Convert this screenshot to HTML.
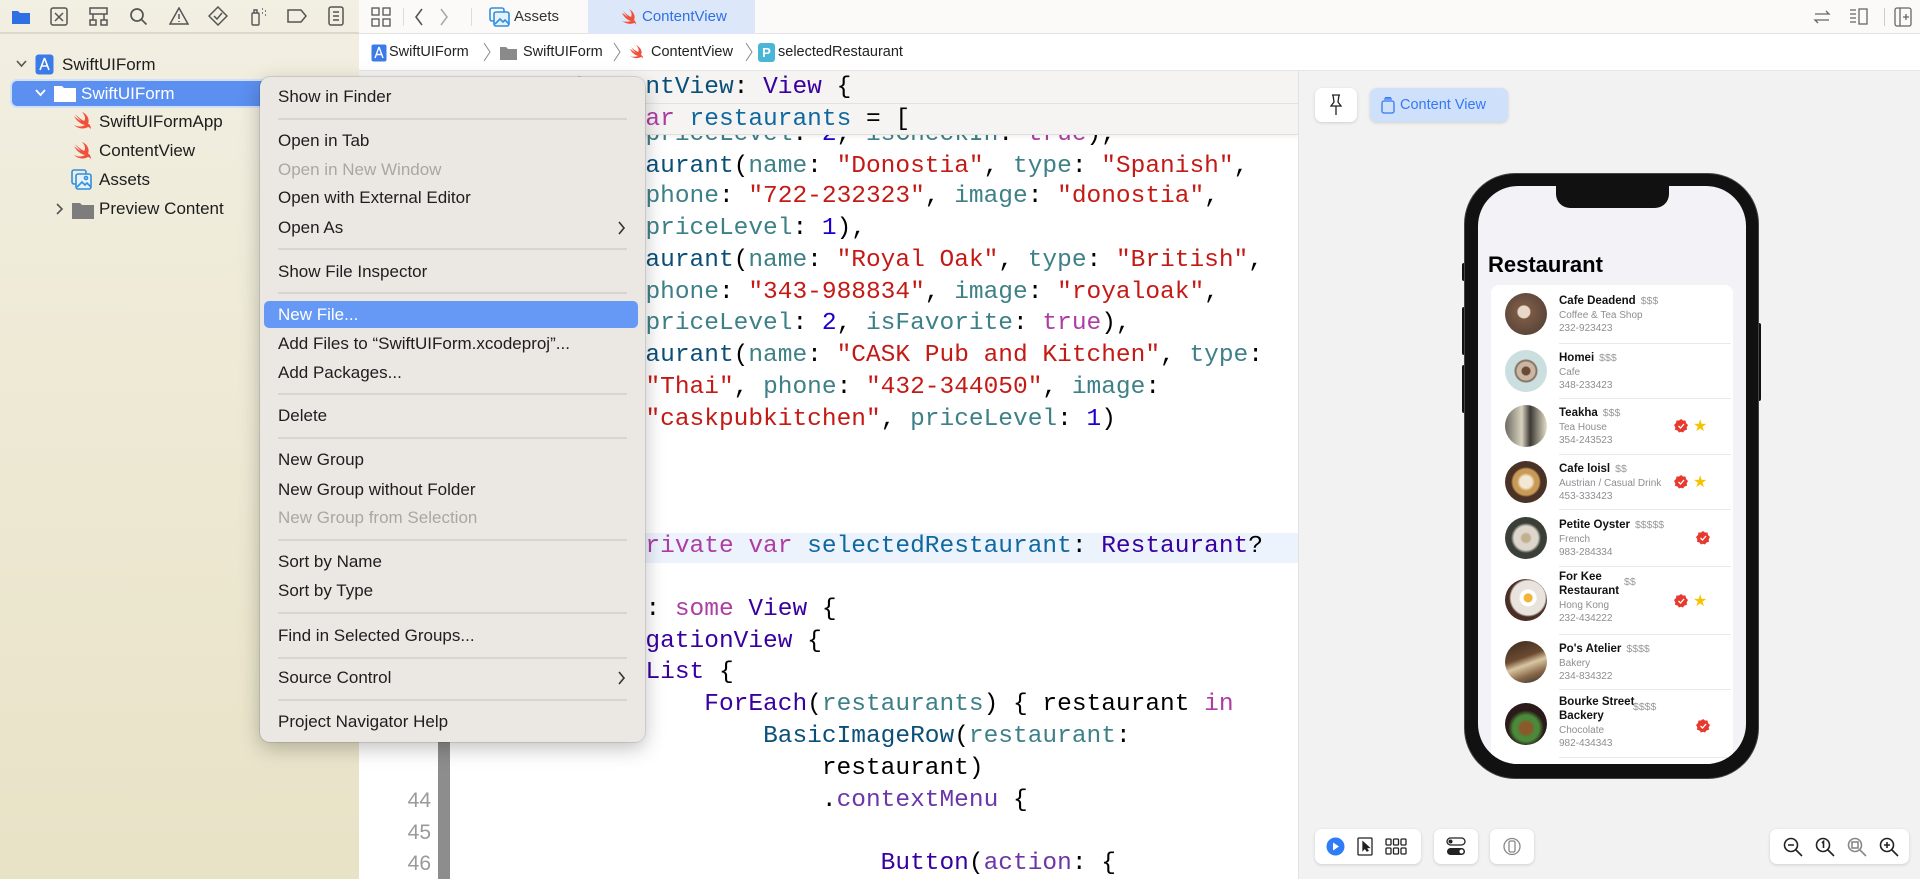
<!DOCTYPE html>
<html><head><meta charset="utf-8"><style>
*{margin:0;padding:0;box-sizing:border-box}
body{width:1920px;height:879px;overflow:hidden;position:relative;font-family:"Liberation Sans",sans-serif;background:#fff}
.abs{position:absolute}
#side{left:0;top:0;width:359px;height:879px;background:linear-gradient(180deg,#f2efe3 0%,#eeead6 40%,#e8e2c6 100%)}
#side .tb{position:absolute;left:0;top:0;width:359px;height:34px;border-bottom:2px solid #ddd8c8}
.tr{position:absolute;font-size:17px;color:#1d1d1d;white-space:nowrap}
#edtab{left:359px;top:0;width:1561px;height:34px;background:#fbfaf9;border-bottom:1px solid #e3e3e3}
#crumb{left:359px;top:34px;width:1561px;height:37px;background:#fff;border-bottom:1px solid #e6e6e6;font-size:14.5px;color:#222}
#code{left:359px;top:71px;width:939px;height:808px;background:#fff;overflow:hidden}
.cl{position:absolute;left:110px;font-family:"Liberation Mono",monospace;font-size:24.5px;white-space:pre;color:#000;line-height:32px;height:32px}
.k{color:#ad3da4}.s{color:#c41a16}.n{color:#1c00cf}.p{color:#3e8087}.t{color:#3900a0}.v{color:#0f68a0}.m{color:#6c36a9}.b{color:#0b4f79}
.ln{position:absolute;left:30px;width:42px;text-align:right;font-size:21px;color:#9a9a9a;line-height:32px}
#menu{left:260px;top:77px;width:385px;height:665px;background:#ebe8e4;border-radius:10px;box-shadow:0 6px 20px rgba(0,0,0,.25),0 0 0 1px rgba(0,0,0,.1)}
.mi{position:absolute;left:18px;font-size:17px;color:#1e1e1e;line-height:20px;white-space:nowrap}
.mi.d{color:#a9a7a4}
.sep{position:absolute;left:18px;width:349px;height:2px;background:#d8d5d1}
#prev{left:1298px;top:71px;width:622px;height:808px;background:#f2f2f2;border-left:1px solid #e2e2e2}
.btn{position:absolute;background:#fff;border-radius:7px;box-shadow:0 1px 3px rgba(0,0,0,.15)}
.row{position:absolute;left:0;width:240px}
.im{position:absolute;left:14px;width:42px;height:42px;border-radius:50%}
.nm{position:absolute;left:68px;font-size:11.5px;font-weight:bold;color:#111;line-height:14px}
.pr{font-weight:normal;color:#999;font-size:10.5px;margin-left:5px}
.sb{position:absolute;left:68px;font-size:10px;color:#8e8e93;line-height:13px}
.rs{position:absolute;left:68px;right:0;height:1px;background:#e8e8ed}
.bd{position:absolute;width:14px;height:14px}
</style></head><body>

<div id="side" class="abs">
 <div class="tb">
  <svg class="abs" style="left:11px;top:8px" width="20" height="17"><path d="M1 3h6l2 2h10v11H1z" fill="#2f6fe4"/></svg>
  <svg class="abs" style="left:50px;top:7px" width="18" height="19" fill="none" stroke="#555" stroke-width="1.5"><rect x="1" y="1" width="16" height="17" rx="2"/><path d="M5 6l8 8M13 6l-8 8"/></svg>
  <svg class="abs" style="left:89px;top:7px" width="19" height="19" fill="none" stroke="#555" stroke-width="1.5"><rect x="1" y="1" width="17" height="6"/><rect x="1" y="13" width="6" height="5"/><rect x="12" y="13" width="6" height="5"/><path d="M4 7v6M15 7v6"/></svg>
  <svg class="abs" style="left:129px;top:7px" width="19" height="19" fill="none" stroke="#555" stroke-width="1.7"><circle cx="8" cy="8" r="6"/><path d="M12.5 12.5l5 5"/></svg>
  <svg class="abs" style="left:169px;top:7px" width="20" height="18" fill="none" stroke="#555" stroke-width="1.5"><path d="M10 1l9 16H1z"/><path d="M10 7v5M10 14v1"/></svg>
  <svg class="abs" style="left:208px;top:6px" width="20" height="20" fill="none" stroke="#555" stroke-width="1.5"><path d="M10 1l9 9-9 9-9-9z"/><path d="M6 10l3 3 5-6"/></svg>
  <svg class="abs" style="left:248px;top:6px" width="20" height="20" fill="none" stroke="#555" stroke-width="1.4"><rect x="4" y="7" width="7" height="12" rx="1"/><path d="M6 7V4h3v3M14 3h1M17 5h1M14 7h1M17 9h1"/></svg>
  <svg class="abs" style="left:286px;top:9px" width="22" height="14" fill="none" stroke="#555" stroke-width="1.5"><path d="M2 1h13l5 6-5 6H2z"/></svg>
  <svg class="abs" style="left:328px;top:6px" width="16" height="20" fill="none" stroke="#555" stroke-width="1.5"><rect x="1" y="1" width="14" height="18" rx="2"/><path d="M5 6h6M5 10h6M5 14h6"/></svg>
 </div>
 <svg class="abs" style="left:16px;top:60px" width="11" height="8" fill="none" stroke="#555" stroke-width="1.6"><path d="M1 1l4.5 5L10 1"/></svg>
 <svg class="abs" style="left:35px;top:54px" width="19" height="21"><rect x="0.5" y="0.5" width="18" height="20" rx="3" fill="#3b7be8"/><path d="M9.5 4L5 16M9.5 4L14 16M6.5 12h6" stroke="#fff" stroke-width="1.6" fill="none"/></svg>
 <div class="tr" style="left:62px;top:55px">SwiftUIForm</div>
 <div class="abs" style="left:12px;top:81px;width:260px;height:25px;background:#5b8ff0;border-radius:5px;box-shadow:0 0 0 2px #cfe0fb"></div>
 <svg class="abs" style="left:35px;top:89px" width="11" height="8" fill="none" stroke="#fff" stroke-width="1.8"><path d="M1 1l4.5 5L10 1"/></svg>
 <svg class="abs" style="left:54px;top:84px" width="22" height="18"><path d="M0 2h8l2 2h12v14H0z" fill="#fff"/></svg>
 <div class="tr" style="left:81px;top:84px;color:#fff">SwiftUIForm</div>
 <svg class="abs" style="left:73px;top:112px" width="18" height="18"><path d="M15 12c2-5-1-10-6-12 3 3 4 7 2 9C7 7 4 4 2 2c2 3 4 5 6 7C6 8 3 6 1 4c2 4 6 8 11 9-3 2-7 2-11 0 3 3 9 5 14 2 1 0 2 1 3 2 0-2-1-4-2-5z" fill="#f05138"/></svg>
 <div class="tr" style="left:99px;top:112px">SwiftUIFormApp</div>
 <svg class="abs" style="left:73px;top:142px" width="18" height="18"><path d="M15 12c2-5-1-10-6-12 3 3 4 7 2 9C7 7 4 4 2 2c2 3 4 5 6 7C6 8 3 6 1 4c2 4 6 8 11 9-3 2-7 2-11 0 3 3 9 5 14 2 1 0 2 1 3 2 0-2-1-4-2-5z" fill="#f05138"/></svg>
 <div class="tr" style="left:99px;top:141px">ContentView</div>
 <svg class="abs" style="left:71px;top:169px" width="21" height="21" fill="none" stroke="#2f8fe0" stroke-width="1.6"><rect x="1" y="1" width="14" height="14" rx="2"/><rect x="5" y="5" width="15" height="15" rx="2" fill="#e5f1fb"/><path d="M6 18l5-5 3 3 2-2 4 4"/><circle cx="15" cy="9" r="1.5"/></svg>
 <div class="tr" style="left:99px;top:170px">Assets</div>
 <svg class="abs" style="left:56px;top:203px" width="8" height="12" fill="none" stroke="#555" stroke-width="1.6"><path d="M1 1l5 5-5 5"/></svg>
 <svg class="abs" style="left:72px;top:201px" width="22" height="18"><path d="M0 2h8l2 2h12v14H0z" fill="#7d7d7d"/></svg>
 <div class="tr" style="left:99px;top:199px">Preview Content</div>
</div>

<div id="edtab" class="abs">
 <svg class="abs" style="left:12px;top:7px" width="20" height="20" fill="none" stroke="#555" stroke-width="1.3"><rect x="1" y="1" width="7" height="7"/><rect x="12" y="1" width="7" height="7"/><rect x="1" y="12" width="7" height="7"/><rect x="12" y="12" width="7" height="7"/></svg>
 <div class="abs" style="left:44px;top:8px;width:1px;height:18px;background:#ddd"></div>
 <svg class="abs" style="left:55px;top:8px" width="10" height="18" fill="none" stroke="#555" stroke-width="1.6"><path d="M8 1L2 9l6 8"/></svg>
 <svg class="abs" style="left:80px;top:8px" width="10" height="18" fill="none" stroke="#aaa" stroke-width="1.6"><path d="M2 1l6 8-6 8"/></svg>
 <div class="abs" style="left:112px;top:8px;width:1px;height:18px;background:#ddd"></div>
 <svg class="abs" style="left:130px;top:7px" width="21" height="20" fill="none" stroke="#2f8fe0" stroke-width="1.6"><rect x="1" y="1" width="14" height="13" rx="2"/><rect x="5" y="5" width="15" height="14" rx="2" fill="#e5f1fb"/><path d="M6 17l5-5 3 3 2-2 4 4"/></svg>
 <div class="abs" style="left:155px;top:8px;font-size:15px;color:#333">Assets</div>
 <div class="abs" style="left:229px;top:0;width:167px;height:34px;background:#dce8fa"></div>
 <svg class="abs" style="left:262px;top:9px" width="16" height="16"><path d="M13 11c2-4-1-9-5-11 3 3 3 6 2 8C6 6 4 4 2 2c2 3 3 4 5 6C5 7 3 5 1 4c2 4 5 7 9 8-3 1-6 1-9 0 3 2 8 4 12 2 1 0 2 1 2 2 0-2 0-3-2-5z" fill="#f05138"/></svg>
 <div class="abs" style="left:283px;top:8px;font-size:15px;color:#2f6fe4">ContentView</div>
 <svg class="abs" style="left:1454px;top:8px" width="18" height="18" fill="none" stroke="#666" stroke-width="1.3"><path d="M2 6h14l-3-3M16 12H2l3 3"/></svg>
 <svg class="abs" style="left:1490px;top:8px" width="20" height="18" fill="none" stroke="#666" stroke-width="1.3"><path d="M1 2h6M1 6h6M1 10h6M1 14h6"/><rect x="10" y="1" width="8" height="15"/></svg>
 <div class="abs" style="left:1525px;top:8px;width:1px;height:18px;background:#ccc"></div>
 <svg class="abs" style="left:1535px;top:7px" width="18" height="20" fill="none" stroke="#666" stroke-width="1.3"><rect x="1" y="1" width="16" height="18" rx="2"/><path d="M6 1v18M9 10h6M12 7v6"/></svg>
</div>

<div id="crumb" class="abs">
 <svg class="abs" style="left:12px;top:10px" width="16" height="18"><rect x="0.5" y="0.5" width="15" height="17" rx="2" fill="#3b7be8"/><path d="M8 3L4 14M8 3l4 11M5 10.5h6" stroke="#fff" stroke-width="1.4" fill="none"/></svg>
 <div class="abs" style="left:30px;top:10px">SwiftUIForm</div>
 <svg class="abs" style="left:124px;top:8px" width="8" height="20" fill="none" stroke="#888" stroke-width="1"><path d="M1 1l6 9-6 9"/></svg>
 <svg class="abs" style="left:141px;top:12px" width="17" height="14"><path d="M0 1h6l2 2h9v11H0z" fill="#8a8a8a"/></svg>
 <div class="abs" style="left:164px;top:10px">SwiftUIForm</div>
 <svg class="abs" style="left:254px;top:8px" width="8" height="20" fill="none" stroke="#888" stroke-width="1"><path d="M1 1l6 9-6 9"/></svg>
 <svg class="abs" style="left:270px;top:11px" width="15" height="15"><path d="M12 10c2-4-1-8-5-10 3 3 3 6 2 7C5 5 3 3 2 2c2 3 3 4 5 6C5 7 3 5 1 4c2 4 5 6 8 7-3 1-5 1-8 0 3 2 7 3 11 1 1 0 2 1 2 2 0-2 0-3-2-4z" fill="#f05138"/></svg>
 <div class="abs" style="left:292px;top:10px">ContentView</div>
 <svg class="abs" style="left:386px;top:8px" width="8" height="20" fill="none" stroke="#888" stroke-width="1"><path d="M1 1l6 9-6 9"/></svg>
 <div class="abs" style="left:399px;top:9px;width:17px;height:19px;background:#49b6d8;border-radius:3px;color:#fff;font-size:13px;font-weight:bold;text-align:center;line-height:19px">P</div>
 <div class="abs" style="left:419px;top:10px">selectedRestaurant</div>
</div>

<div id="code" class="abs">
 <div class="abs" style="left:0;top:462px;width:939px;height:30px;background:#edf3fc"></div>
 <div class="cl" style="top:48px">            <span class="p">priceLevel</span>: <span class="n">2</span>, <span class="p">isCheckIn</span>: <span class="k">true</span>),</div>
 <div class="cl" style="top:80px">        <span class="b">Restaurant</span>(<span class="p">name</span>: <span class="s">"Donostia"</span>, <span class="p">type</span>: <span class="s">"Spanish"</span>,</div>
 <div class="cl" style="top:110px">            <span class="p">phone</span>: <span class="s">"722-232323"</span>, <span class="p">image</span>: <span class="s">"donostia"</span>,</div>
 <div class="cl" style="top:142px">            <span class="p">priceLevel</span>: <span class="n">1</span>),</div>
 <div class="cl" style="top:174px">        <span class="b">Restaurant</span>(<span class="p">name</span>: <span class="s">"Royal Oak"</span>, <span class="p">type</span>: <span class="s">"British"</span>,</div>
 <div class="cl" style="top:206px">            <span class="p">phone</span>: <span class="s">"343-988834"</span>, <span class="p">image</span>: <span class="s">"royaloak"</span>,</div>
 <div class="cl" style="top:237px">            <span class="p">priceLevel</span>: <span class="n">2</span>, <span class="p">isFavorite</span>: <span class="k">true</span>),</div>
 <div class="cl" style="top:269px">        <span class="b">Restaurant</span>(<span class="p">name</span>: <span class="s">"CASK Pub and Kitchen"</span>, <span class="p">type</span>:</div>
 <div class="cl" style="top:301px">            <span class="s">"Thai"</span>, <span class="p">phone</span>: <span class="s">"432-344050"</span>, <span class="p">image</span>:</div>
 <div class="cl" style="top:333px">            <span class="s">"caskpubkitchen"</span>, <span class="p">priceLevel</span>: <span class="n">1</span>)</div>
 <div class="cl" style="top:365px">    ]</div>
 <div class="cl" style="top:460px">    <span class="k">@State private var</span> <span class="v">selectedRestaurant</span>: <span class="t">Restaurant</span>?</div>
 <div class="cl" style="top:523px">    <span class="k">var</span> <span class="v">body</span>: <span class="k">some</span> <span class="t">View</span> {</div>
 <div class="cl" style="top:555px">        <span class="t">NavigationView</span> {</div>
 <div class="cl" style="top:586px">            <span class="t">List</span> {</div>
 <div class="cl" style="top:618px">                <span class="t">ForEach</span>(<span class="p">restaurants</span>) { restaurant <span class="k">in</span></div>
 <div class="cl" style="top:650px">                    <span class="b">BasicImageRow</span>(<span class="p">restaurant</span>:</div>
 <div class="cl" style="top:682px">                        restaurant)</div>
 <div class="cl" style="top:714px">                        .<span class="m">contextMenu</span> {</div>
 <div class="cl" style="top:777px">                            <span class="t">Button</span>(<span class="m">action</span>: {</div>
 <div class="ln" style="top:714px">44</div>
 <div class="ln" style="top:746px">45</div>
 <div class="ln" style="top:777px">46</div>
 <div class="abs" style="left:79px;top:660px;width:12px;height:148px;background:#8d8d8d;border-radius:6px 6px 0 0"></div>
 <div class="abs" style="left:0;top:0;width:939px;height:64px;background:#f5f4f2;border-bottom:1px solid #dedede;box-shadow:0 2px 4px rgba(0,0,0,.06)"></div>
 <div class="abs" style="left:0;top:32px;width:939px;height:1px;background:#e2e2e2"></div>
 <div class="cl" style="top:1px"><span class="k">struct</span> <span class="b">ContentView</span>: <span class="t">View</span> {</div>
 <div class="cl" style="top:33px">    <span class="k">@State var</span> <span class="v">restaurants</span> = [</div>
</div>

<div id="prev" class="abs">
 <div class="btn" style="left:16px;top:17px;width:42px;height:34px"><svg class="abs" style="left:14px;top:6px" width="14" height="22" fill="none" stroke="#222" stroke-width="1.3"><path d="M3 1h8M4 1l1 7-3 4h10l-3-4 1-7M7 12v9"/></svg></div>
 <div class="btn" style="left:71px;top:17px;width:138px;height:34px;background:#cfe0fb"><svg class="abs" style="left:11px;top:9px" width="14" height="17" fill="none" stroke="#3478f6" stroke-width="1.3"><rect x="1" y="4" width="12" height="12" rx="2"/><path d="M3 2h8M4 0.5h6"/></svg><div class="abs" style="left:30px;top:9px;font-size:14.5px;color:#3478f6">Content View</div></div>
 <div class="abs" style="left:163px;top:192px;width:6px;height:18px;background:#111;border-radius:2px"></div>
 <div class="abs" style="left:163px;top:236px;width:6px;height:48px;background:#111;border-radius:2px"></div>
 <div class="abs" style="left:163px;top:294px;width:6px;height:48px;background:#111;border-radius:2px"></div>
 <div class="abs" style="left:457px;top:252px;width:5px;height:78px;background:#111;border-radius:2px"></div>
 <div class="abs" style="left:166px;top:103px;width:293px;height:604px;background:#111;border-radius:50px;box-shadow:0 0 0 1px #444"></div>
 <div class="abs" style="left:179px;top:115px;width:268px;height:578px;background:#f2f2f7;border-radius:40px;overflow:hidden">
  <div class="abs" style="left:78px;top:0;width:113px;height:22px;background:#111;border-radius:0 0 14px 14px"></div>
  <div class="abs" style="left:10px;top:66px;font-size:22px;font-weight:bold;color:#000">Restaurant</div>
  <div class="abs" style="left:13px;top:99px;width:242px;height:500px;background:#fff;border-radius:8px">
   <div class="row" style="top:0">
    <div class="im" style="top:8px;background:radial-gradient(circle at 45% 45%,#e8d8c8 0 6px,#7a5a45 7px,#4a3a33 100%)"></div>
    <div class="nm" style="top:9px">Cafe Deadend<span class="pr">$$$</span></div>
    <div class="sb" style="top:24px">Coffee &amp; Tea Shop</div><div class="sb" style="top:37px">232-923423</div>
    <div class="rs" style="top:58px"></div></div>
   <div class="row" style="top:58px">
    <div class="im" style="top:7px;background:radial-gradient(circle,#6b4a35 0 4px,#c9b7a3 5px 9px,#8a7565 10px 11px,#cbdfe0 12px)"></div>
    <div class="nm" style="top:8px">Homei<span class="pr">$$$</span></div>
    <div class="sb" style="top:23px">Cafe</div><div class="sb" style="top:36px">348-233423</div>
    <div class="rs" style="top:55px"></div></div>
   <div class="row" style="top:113px">
    <div class="im" style="top:7px;background:linear-gradient(90deg,#6b6a60,#d8d2bf 40%,#3d3a35 60%,#e5dfc8)"></div>
    <div class="nm" style="top:8px">Teakha<span class="pr">$$$</span></div>
    <div class="sb" style="top:23px">Tea House</div><div class="sb" style="top:36px">354-243523</div>
    <svg class="bd" style="left:183px;top:21px" viewBox="0 0 14 14"><path d="M7 0l2 1.5 2.5 0 .5 2.5 2 2-1.3 2.2.3 2.5-2.5.8L9 13.5 7 12.7 5 13.5 3.5 11.5 1 10.7l.3-2.5L0 6l2-2L2.5 1.5 5 1.5z" fill="#e8392d"/><path d="M4.5 7l2 2 3.5-4" stroke="#fff" stroke-width="1.3" fill="none"/></svg>
    <div class="abs" style="left:202px;top:18px;font-size:16px;color:#f6c300">★</div>
    <div class="rs" style="top:56px"></div></div>
   <div class="row" style="top:169px">
    <div class="im" style="top:7px;background:radial-gradient(circle,#f3e8d3 0 6px,#c99a55 9px 13px,#4a3326 15px)"></div>
    <div class="nm" style="top:8px">Cafe loisl<span class="pr">$$</span></div>
    <div class="sb" style="top:23px">Austrian / Casual Drink</div><div class="sb" style="top:36px">453-333423</div>
    <svg class="bd" style="left:183px;top:21px" viewBox="0 0 14 14"><path d="M7 0l2 1.5 2.5 0 .5 2.5 2 2-1.3 2.2.3 2.5-2.5.8L9 13.5 7 12.7 5 13.5 3.5 11.5 1 10.7l.3-2.5L0 6l2-2L2.5 1.5 5 1.5z" fill="#e8392d"/><path d="M4.5 7l2 2 3.5-4" stroke="#fff" stroke-width="1.3" fill="none"/></svg>
    <div class="abs" style="left:202px;top:18px;font-size:16px;color:#f6c300">★</div>
    <div class="rs" style="top:55px"></div></div>
   <div class="row" style="top:224px">
    <div class="im" style="top:8px;background:radial-gradient(circle,#c3b08f 0 4px,#dcd6cc 6px 12px,#3a4038 15px)"></div>
    <div class="nm" style="top:9px">Petite Oyster<span class="pr">$$$$$</span></div>
    <div class="sb" style="top:24px">French</div><div class="sb" style="top:37px">983-284334</div>
    <svg class="bd" style="left:205px;top:22px" viewBox="0 0 14 14"><path d="M7 0l2 1.5 2.5 0 .5 2.5 2 2-1.3 2.2.3 2.5-2.5.8L9 13.5 7 12.7 5 13.5 3.5 11.5 1 10.7l.3-2.5L0 6l2-2L2.5 1.5 5 1.5z" fill="#e8392d"/><path d="M4.5 7l2 2 3.5-4" stroke="#fff" stroke-width="1.3" fill="none"/></svg>
    <div class="rs" style="top:57px"></div></div>
   <div class="row" style="top:281px">
    <div class="im" style="top:13px;background:radial-gradient(circle at 55% 45%,#f2b33a 0 4px,#fff 5px 8px,#e8e3dc 9px 17px,#4a2e26 19px)"></div>
    <div class="nm" style="top:4px">For Kee<br>Restaurant</div><div class="abs" style="left:133px;top:10px;font-size:10.5px;color:#999">$$</div>
    <div class="sb" style="top:33px">Hong Kong</div><div class="sb" style="top:46px">232-434222</div>
    <svg class="bd" style="left:183px;top:28px" viewBox="0 0 14 14"><path d="M7 0l2 1.5 2.5 0 .5 2.5 2 2-1.3 2.2.3 2.5-2.5.8L9 13.5 7 12.7 5 13.5 3.5 11.5 1 10.7l.3-2.5L0 6l2-2L2.5 1.5 5 1.5z" fill="#e8392d"/><path d="M4.5 7l2 2 3.5-4" stroke="#fff" stroke-width="1.3" fill="none"/></svg>
    <div class="abs" style="left:202px;top:25px;font-size:16px;color:#f6c300">★</div>
    <div class="rs" style="top:68px"></div></div>
   <div class="row" style="top:349px">
    <div class="im" style="top:7px;background:linear-gradient(160deg,#3a2a20,#6b4a30 40%,#d9c6a2 55%,#8a6a4a 75%,#2a2a2a)"></div>
    <div class="nm" style="top:8px">Po's Atelier<span class="pr">$$$$</span></div>
    <div class="sb" style="top:23px">Bakery</div><div class="sb" style="top:36px">234-834322</div>
    <div class="rs" style="top:55px"></div></div>
   <div class="row" style="top:404px">
    <div class="im" style="top:14px;background:radial-gradient(circle at 50% 60%,#8a5a2a 0 6px,#4a8a3a 9px 13px,#2a1a1a 18px)"></div>
    <div class="nm" style="top:6px">Bourke Street<br>Backery</div><div class="abs" style="left:142px;top:12px;font-size:10.5px;color:#999">$$$$</div>
    <div class="sb" style="top:35px">Chocolate</div><div class="sb" style="top:48px">982-434343</div>
    <svg class="bd" style="left:205px;top:30px" viewBox="0 0 14 14"><path d="M7 0l2 1.5 2.5 0 .5 2.5 2 2-1.3 2.2.3 2.5-2.5.8L9 13.5 7 12.7 5 13.5 3.5 11.5 1 10.7l.3-2.5L0 6l2-2L2.5 1.5 5 1.5z" fill="#e8392d"/><path d="M4.5 7l2 2 3.5-4" stroke="#fff" stroke-width="1.3" fill="none"/></svg>
    <div class="rs" style="top:68px"></div></div>
  </div>
 </div>
 <div class="btn" style="left:16px;top:758px;width:106px;height:35px">
  <svg class="abs" style="left:11px;top:8px" width="19" height="19"><circle cx="9.5" cy="9.5" r="9" fill="#2f7cf6"/><path d="M7 5.5v8l6-4z" fill="#fff"/></svg>
  <svg class="abs" style="left:42px;top:8px" width="16" height="19" fill="none" stroke="#222" stroke-width="1.3"><rect x="1" y="1" width="14" height="17" rx="1"/><path d="M6 5v8l2-2 2 3 1-.5-2-3h3z" fill="#222"/></svg>
  <svg class="abs" style="left:70px;top:9px" width="22" height="17" fill="none" stroke="#222" stroke-width="1.3"><rect x="1" y="1" width="5" height="6" rx="1"/><rect x="8.5" y="1" width="5" height="6" rx="1"/><rect x="16" y="1" width="5" height="6" rx="1"/><rect x="1" y="10" width="5" height="6" rx="1"/><rect x="8.5" y="10" width="5" height="6" rx="1"/><rect x="16" y="10" width="5" height="6" rx="1"/></svg>
 </div>
 <div class="btn" style="left:135px;top:758px;width:44px;height:35px"><svg class="abs" style="left:12px;top:8px" width="20" height="19"><rect x="1" y="1" width="18" height="7" rx="3.5" fill="none" stroke="#222" stroke-width="1.3"/><circle cx="4.5" cy="4.5" r="2" fill="#222"/><rect x="1" y="11" width="18" height="7" rx="3.5" fill="#222"/><circle cx="15.5" cy="14.5" r="2" fill="#fff"/></svg></div>
 <div class="btn" style="left:191px;top:758px;width:44px;height:35px"><svg class="abs" style="left:13px;top:8px" width="18" height="19" fill="none" stroke="#888" stroke-width="1.3"><circle cx="9" cy="9.5" r="8"/><rect x="6" y="4" width="6" height="11" rx="1.5"/></svg></div>
 <div class="btn" style="left:471px;top:758px;width:139px;height:35px">
  <svg class="abs" style="left:13px;top:8px" width="20" height="20" fill="none" stroke="#222" stroke-width="1.6"><circle cx="8" cy="8" r="6.5"/><path d="M13 13l6 6M5 8h6"/></svg>
  <svg class="abs" style="left:45px;top:8px" width="20" height="20" fill="none" stroke="#222" stroke-width="1.6"><circle cx="8" cy="8" r="6.5"/><path d="M13 13l6 6M7 6l1.5-1.5V11"/></svg>
  <svg class="abs" style="left:77px;top:8px" width="20" height="20" fill="none" stroke="#888" stroke-width="1.6"><circle cx="8" cy="8" r="6.5"/><path d="M13 13l6 6"/><rect x="5" y="5" width="6" height="6"/></svg>
  <svg class="abs" style="left:109px;top:8px" width="20" height="20" fill="none" stroke="#222" stroke-width="1.6"><circle cx="8" cy="8" r="6.5"/><path d="M13 13l6 6M5 8h6M8 5v6"/></svg>
 </div>
</div>

<div id="menu" class="abs">
 <div class="mi" style="top:10px">Show in Finder</div>
 <div class="sep" style="top:41px"></div>
 <div class="mi" style="top:54px">Open in Tab</div>
 <div class="mi d" style="top:83px">Open in New Window</div>
 <div class="mi" style="top:111px">Open with External Editor</div>
 <div class="mi" style="top:141px">Open As</div>
 <svg class="abs" style="left:358px;top:144px" width="8" height="14" fill="none" stroke="#333" stroke-width="1.6"><path d="M1 1l5 6-5 6"/></svg>
 <div class="sep" style="top:171px"></div>
 <div class="mi" style="top:185px">Show File Inspector</div>
 <div class="sep" style="top:215px"></div>
 <div class="abs" style="left:4px;top:224px;width:374px;height:27px;background:#6699f5;border-radius:5px"></div>
 <div class="mi" style="top:228px;color:#fff">New File...</div>
 <div class="mi" style="top:257px">Add Files to “SwiftUIForm.xcodeproj”...</div>
 <div class="mi" style="top:286px">Add Packages...</div>
 <div class="sep" style="top:316px"></div>
 <div class="mi" style="top:329px">Delete</div>
 <div class="sep" style="top:360px"></div>
 <div class="mi" style="top:373px">New Group</div>
 <div class="mi" style="top:403px">New Group without Folder</div>
 <div class="mi d" style="top:431px">New Group from Selection</div>
 <div class="sep" style="top:462px"></div>
 <div class="mi" style="top:475px">Sort by Name</div>
 <div class="mi" style="top:504px">Sort by Type</div>
 <div class="sep" style="top:535px"></div>
 <div class="mi" style="top:549px">Find in Selected Groups...</div>
 <div class="sep" style="top:580px"></div>
 <div class="mi" style="top:591px">Source Control</div>
 <svg class="abs" style="left:358px;top:594px" width="8" height="14" fill="none" stroke="#333" stroke-width="1.6"><path d="M1 1l5 6-5 6"/></svg>
 <div class="sep" style="top:622px"></div>
 <div class="mi" style="top:635px">Project Navigator Help</div>
</div>
</body></html>
